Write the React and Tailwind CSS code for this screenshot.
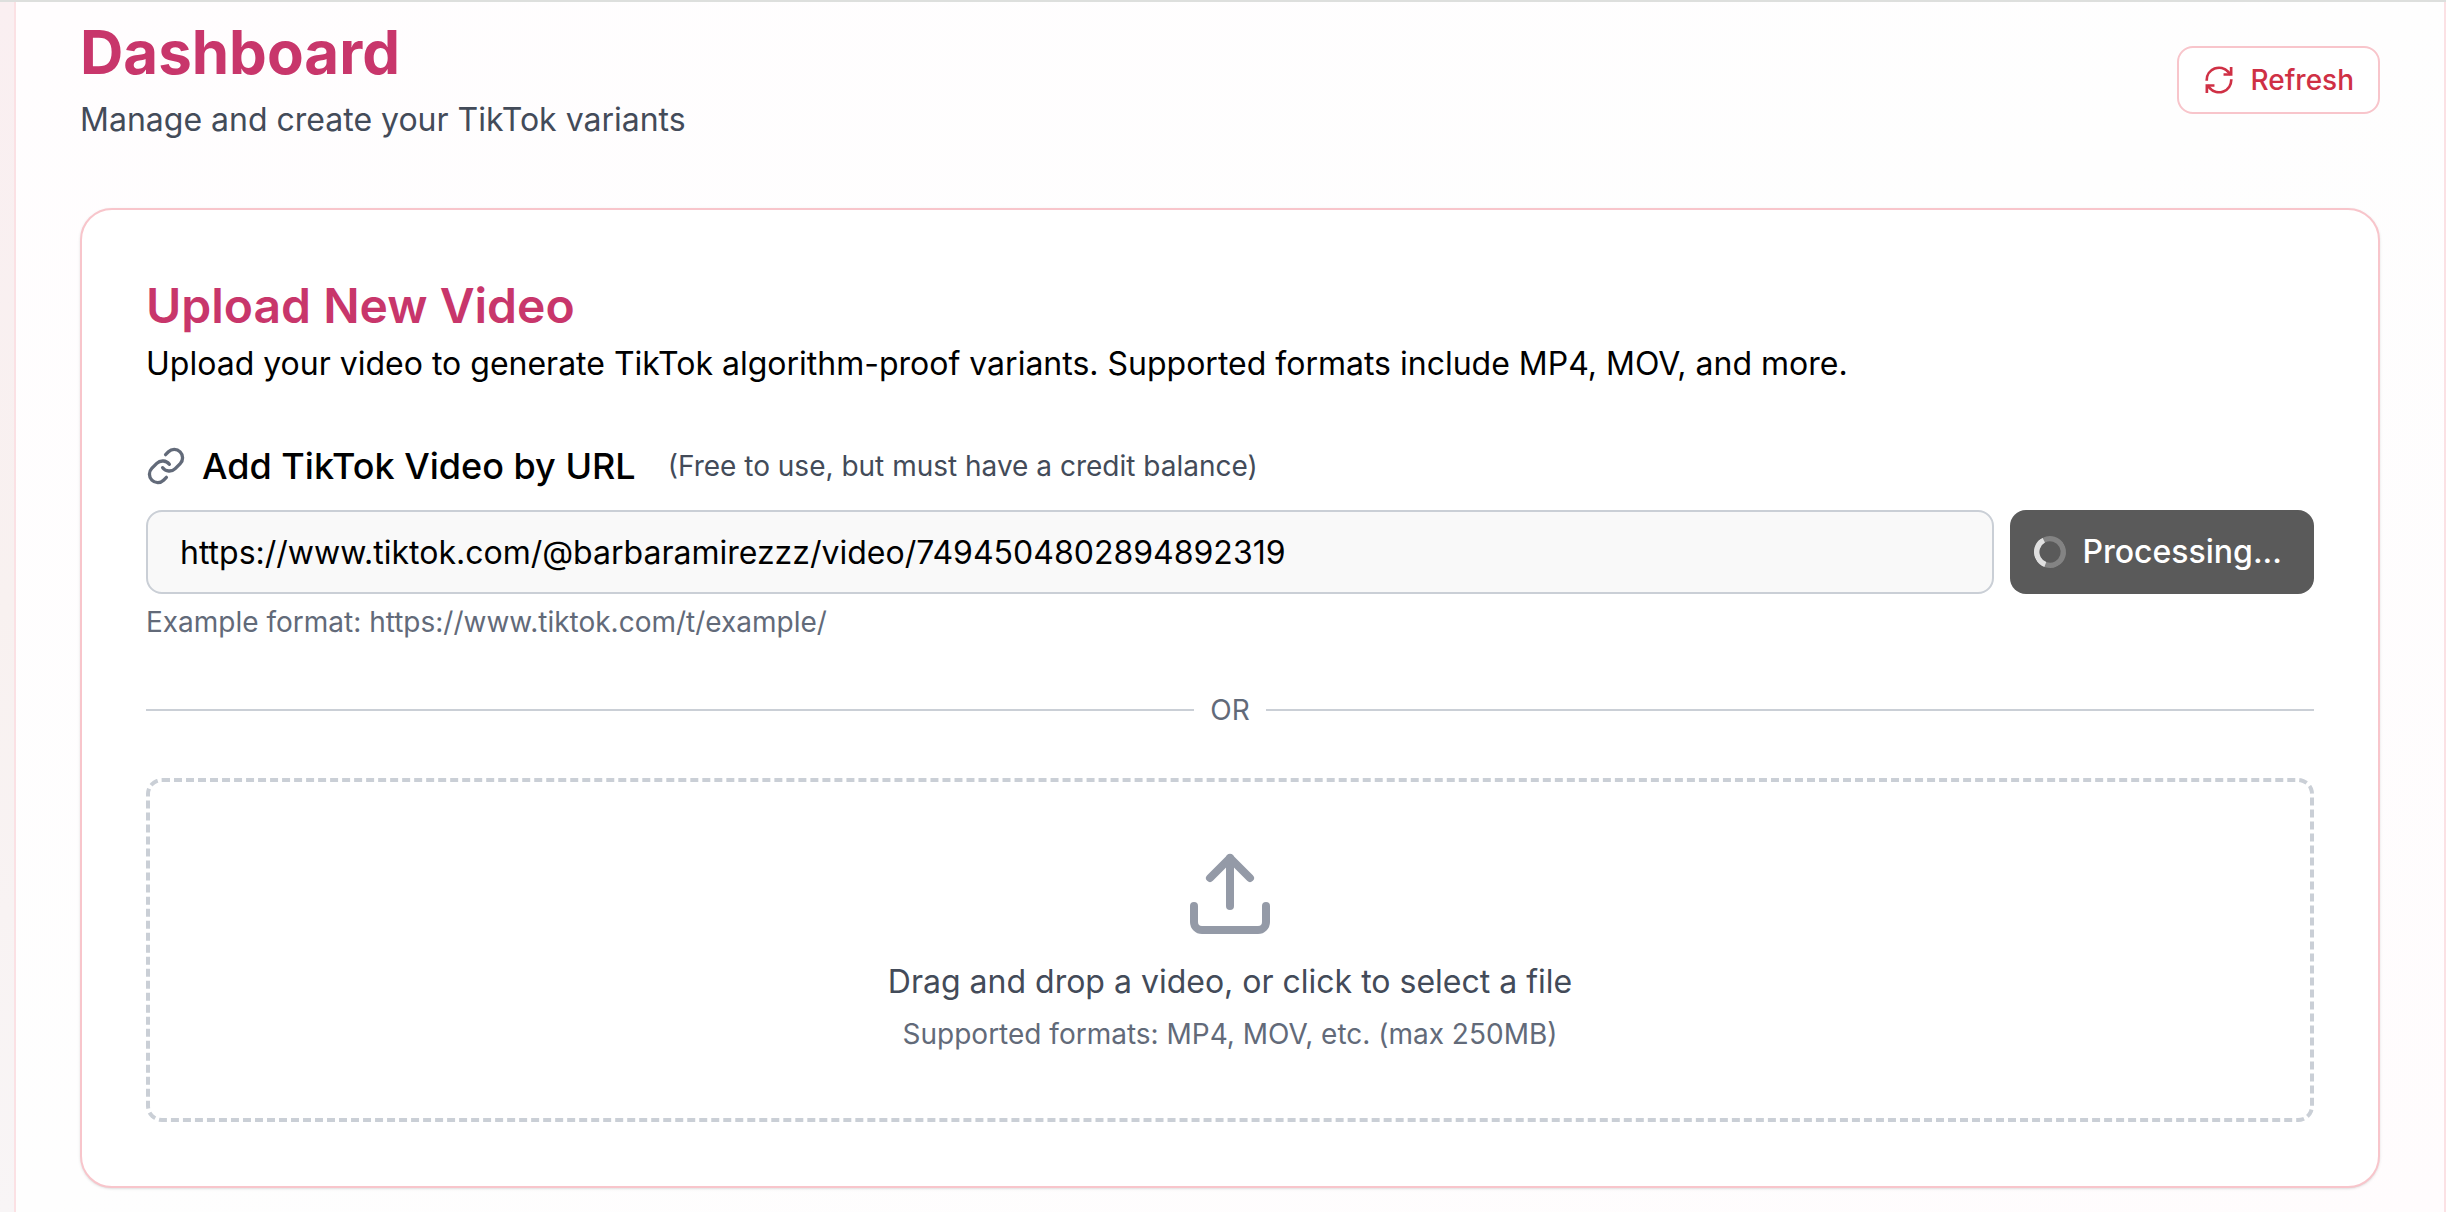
import { useState } from "react";
import { Link, Upload } from "lucide-react";

function Spinner() {
    return (
        <svg className="size-8 -rotate-28" viewBox="0 0 24 24" fill="none" aria-hidden="true">
            <circle cx="12" cy="12" r="10" stroke="#ffffff" strokeOpacity="0.25" strokeWidth="4" />
            <path
                fill="#ffffff"
                fillOpacity="0.75"
                d="M4 12a8 8 0 0 1 8-8V0C5.373 0 0 5.373 0 12h4zm2 5.291A7.962 7.962 0 0 1 4 12H0c0 3.042 1.135 5.824 3 7.938l3-2.647z"
            />
        </svg>
    );
}

function RefreshIcon() {
    return (
        <svg
            className="size-8"
            viewBox="0 0 24 24"
            fill="none"
            stroke="currentColor"
            strokeWidth="2"
            aria-hidden="true"
        >
            <path d="M2.8 12.6V12A9.2 9.2 0 0 1 18.8 5.8L20.8 8" />
            <path d="M21.1 2.2V7.9H15.4" />
            <path d="M21.2 11.4V12A9.2 9.2 0 0 1 5.2 18.2L3.2 16" />
            <path d="M2.9 21.8V16.1H8.6" />
        </svg>
    );
}

export default function App() {
    const [url, setUrl] = useState(
        "https://www.tiktok.com/@barbaramirezzz/video/7494504802894892319"
    );

    return (
        <div className="flex min-h-screen border-t-2 border-[#dddfdd] bg-[#fdf3f4] font-['Inter',sans-serif] text-black">

            {/* Sidebar edge */}
            <div className="w-[14px] shrink-0 bg-linear-to-b from-[#faeff1] via-[#f8f1f0] to-[#f8f5f6]" />

            <main className="flex-1 border-x-2 border-[#fbe1e4] bg-linear-to-br from-[#fffdfe] via-[#fefefe] to-[#fffcfd] px-16 pb-6">

                {/* Header */}
                <div className="flex items-center justify-between pt-3.5">
                    <div>
                        <h1 className="text-[60px] leading-[72px] font-bold text-[#c8366b]">
                            Dashboard
                        </h1>
                        <p className="mt-2 text-[32px] leading-[48px] text-[#434b59]">
                            Manage and create your TikTok variants
                        </p>
                    </div>
                    <button
                        type="button"
                        className="flex h-[68px] items-center gap-4 rounded-2xl border-2 border-[#f8c5cb] bg-white px-6 text-[28px] leading-[40px] font-medium text-[#cf3045]"
                    >
                        <RefreshIcon />
                        Refresh
                    </button>
                </div>

                {/* Upload card */}
                <section className="mt-16 rounded-[32px] border-2 border-[#f8c5cb] bg-white p-16 shadow-sm">
                    <h2 className="text-[48px] leading-[64px] font-semibold text-[#c8366b]">
                        Upload New Video
                    </h2>
                    <p className="text-[32px] leading-[52px]">
                        Upload your video to generate TikTok algorithm-proof variants. Supported formats include MP4, MOV, and more.
                    </p>

                    {/* Video by URL */}
                    <div className="mt-12 flex items-center">
                        <Link className="mr-4 size-10 text-[#626a79]" />
                        <label htmlFor="video-url" className="text-[36px] leading-[56px] font-medium">
                            Add TikTok Video by URL
                        </label>
                        <span className="ml-8 text-[28px] leading-[40px] text-[#434b59]">
                            (Free to use, but must have a credit balance)
                        </span>
                    </div>
                    <div className="mt-4 flex gap-4">
                        <input
                            id="video-url"
                            type="text"
                            value={url}
                            onChange={(e) => setUrl(e.target.value)}
                            className="h-[84px] min-w-0 flex-1 rounded-2xl border-2 border-[#cacfd6] bg-[#f9f9f9] px-8 text-[32px] leading-[48px]"
                        />
                        <button
                            type="button"
                            className="flex h-[84px] items-center gap-4 rounded-2xl bg-[#5a5a5a] pr-8 pl-6 text-[32px] leading-[48px] font-medium text-white"
                        >
                            <Spinner />
                            Processing...
                        </button>
                    </div>
                    <p className="mt-2 text-[28px] leading-[40px] text-[#626a79]">
                        Example format: https://www.tiktok.com/t/example/
                    </p>

                    {/* Divider */}
                    <div className="my-12 flex items-center gap-4">
                        <div className="h-[2px] flex-1 bg-[#cacfd6]" />
                        <span className="text-[28px] leading-[40px] text-[#626a79]">OR</span>
                        <div className="h-[2px] flex-1 bg-[#cacfd6]" />
                    </div>

                    {/* Drop zone */}
                    <button
                        type="button"
                        className="flex w-full flex-col items-center rounded-2xl border-4 border-dashed border-[#cacfd6] p-16"
                    >
                        <Upload className="size-24 text-[#949aa7]" />
                        <span className="mt-4 text-[32px] leading-[48px] text-[#434b59]">
                            Drag and drop a video, or click to select a file
                        </span>
                        <span className="mt-2 text-[28px] leading-[40px] text-[#626a79]">
                            Supported formats: MP4, MOV, etc. (max 250MB)
                        </span>
                    </button>
                </section>
            </main>
        </div>
    );
}
